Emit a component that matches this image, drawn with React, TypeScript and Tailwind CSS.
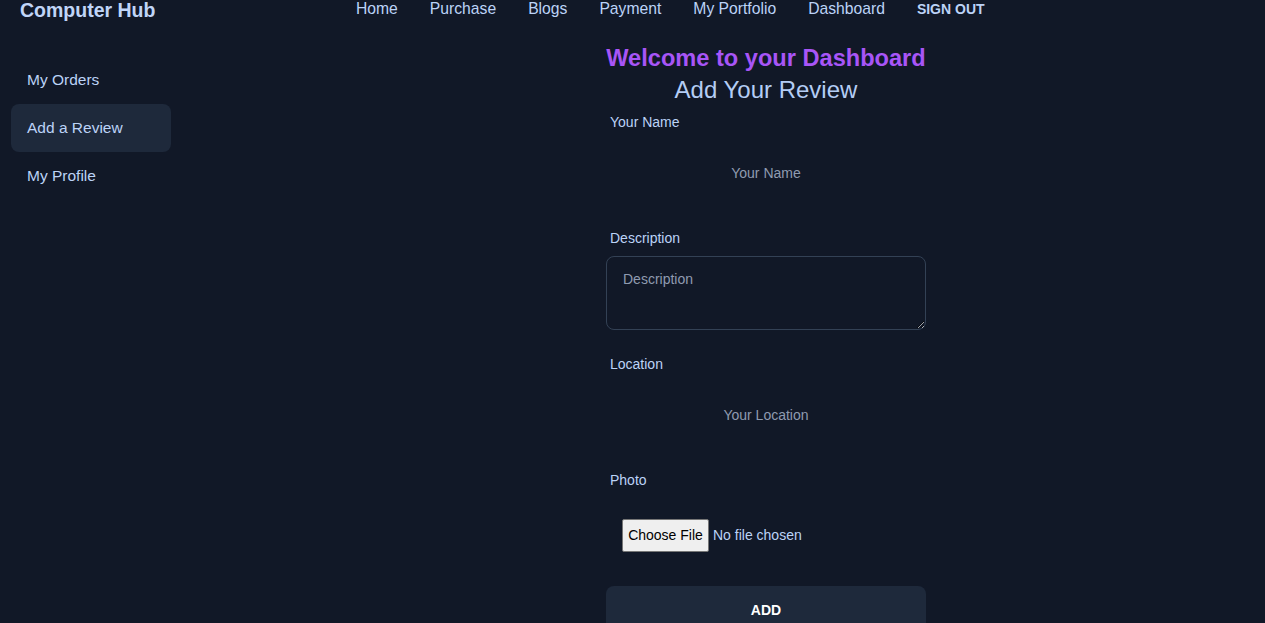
import React from "react";

const navItems = ["Home", "Purchase", "Blogs", "Payment", "My Portfolio", "Dashboard"];

export default function App() {
  return (
    <div className="min-h-[623px] w-full bg-[#111827] text-[#bcd3f7] font-['Liberation_Sans',Arial,sans-serif] overflow-hidden">
      <header className="h-5 flex items-center relative">
        <div className="pl-5 text-[19.5px] leading-5 font-bold text-[#c0d5f8] whitespace-nowrap">Computer Hub</div>
        <nav className="absolute left-[340px] top-[-1px] h-5 flex items-center">
          {navItems.map((n) => (
            <span key={n} className="px-4 text-[15.7px] leading-5 whitespace-nowrap">{n}</span>
          ))}
          <span className="px-4 text-[14px] leading-5 font-bold whitespace-nowrap">SIGN OUT</span>
        </nav>
      </header>
      <div className="flex">
        <aside className="w-[267px] shrink-0 pt-[36px] pl-[11px]">
          <ul className="w-[160px] flex flex-col">
            <li className="h-12 px-4 flex items-center text-[15.5px] rounded-lg">My Orders</li>
            <li className="h-12 px-4 flex items-center text-[15.5px] rounded-lg bg-[#1e293b]">Add a Review</li>
            <li className="h-12 px-4 flex items-center text-[15.5px] rounded-lg">My Profile</li>
          </ul>
        </aside>
        <main className="flex-1 flex flex-col items-center pt-[22px]">
          <div className="w-80 flex flex-col">
            <h1 className="text-center text-[23.6px] leading-8 font-bold text-[#a855f7] whitespace-nowrap">Welcome to your Dashboard</h1>
            <h2 className="text-center text-[24px] leading-8 text-[#b4cdf5] whitespace-nowrap">Add Your Review</h2>
            <label className="mt-[6px] px-1 text-sm leading-5">Your Name</label>
            <input
              className="mt-[17px] h-12 w-full bg-transparent text-center text-sm outline-none placeholder:text-[#8f9bb0]"
              placeholder="Your Name"
            />
            <label className="mt-[31px] px-1 text-sm leading-5">Description</label>
            <textarea
              className="mt-2 h-[74px] w-full rounded-lg border border-[#334155] bg-transparent px-4 py-3 text-sm leading-5 outline-none placeholder:text-[#8f9bb0]"
              placeholder="Description"
            />
            <label className="mt-[24px] px-1 text-sm leading-5">Location</label>
            <input
              className="mt-[17px] h-12 w-full bg-transparent text-center text-sm outline-none placeholder:text-[#8f9bb0]"
              placeholder="Your Location"
            />
            <label className="mt-[31px] px-1 text-sm leading-5">Photo</label>
            <div className="mt-[21px] h-12 flex items-center px-4">
              <span className="h-[33px] w-[87px] flex items-center justify-center border border-[#767676] rounded-[2px] bg-[#efefef] text-black text-sm">Choose File</span>
              <span className="ml-1 text-sm">No file chosen</span>
            </div>
            <button className="mt-[27px] h-12 w-full shrink-0 rounded-lg bg-[#1e293b] text-white text-sm font-bold">ADD</button>
          </div>
        </main>
      </div>
    </div>
  );
}
